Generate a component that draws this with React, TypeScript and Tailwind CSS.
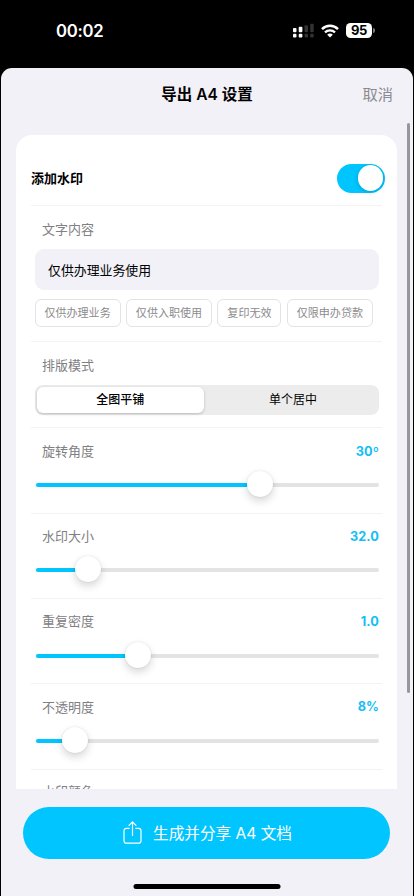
import { useState } from 'react';

interface ISlider {
    label: string;
    value: string;
    percent: number;
}

const presets = ['仅供办理业务', '仅供入职使用', '复印无效', '仅限申办贷款'];
const modes = ['全图平铺', '单个居中'];

const sliders: ISlider[] = [
    { label: '旋转角度', value: '30º', percent: 65.5 },
    { label: '水印大小', value: '32.0', percent: 15.2 },
    { label: '重复密度', value: '1.0', percent: 30 },
    { label: '不透明度', value: '8%', percent: 11.6 },
];

function StatusBar() {
    return (
        <div className="flex h-[68px] shrink-0 items-start justify-between pl-[56px] pr-[39px] text-white">
            <span className="mt-[21px] text-[16.7px] leading-5 font-semibold tracking-[-0.3px]">00:02</span>
            <div className="mt-[23px] flex items-center">
                {/* dual sim signal */}
                <svg width="21" height="15" viewBox="0 0 21 15">
                    <g fill="#fff">
                        <rect x="0" y="5" width="3.5" height="4.3" rx="1" />
                        <rect x="5.7" y="3.7" width="3.7" height="5.6" rx="1" />
                        <rect x="0" y="10.8" width="3.5" height="3.7" rx="1" />
                        <rect x="5.7" y="10.8" width="3.7" height="3.7" rx="1" />
                    </g>
                    <g fill="#333">
                        <rect x="11.5" y="2.2" width="3.5" height="7.1" rx="1" />
                        <rect x="17.2" y="0.8" width="3.5" height="8.5" rx="1" />
                        <rect x="11.5" y="10.8" width="3.5" height="3.7" rx="1" />
                        <rect x="17.2" y="10.8" width="3.5" height="3.7" rx="1" />
                    </g>
                </svg>
                <svg className="ml-[7px]" width="18" height="14" viewBox="0 0 18 14" fill="none" stroke="#fff">
                    <path d="M1 5.1a11.5 11.5 0 0 1 16 0" strokeWidth="2.5" />
                    <path d="M4 8.3a7.3 7.3 0 0 1 10 0" strokeWidth="2.3" />
                    <path d="M9 13.5 6.2 10.7a3.9 3.9 0 0 1 5.6 0Z" fill="#fff" stroke="none" />
                </svg>
                <span className="ml-[7px] flex h-[15px] w-[26px] items-center justify-center rounded-[4.5px] bg-white text-[13px] leading-none font-bold tracking-[-0.3px] text-black">95</span>
                <span className="ml-px h-[5px] w-[2px] rounded-r-full bg-[#777]" />
            </div>
        </div>
    );
}

function SectionLabel({ children }: { children: string }) {
    return <span className="pl-[11px] text-[13px] leading-5 text-[#808083]">{children}</span>;
}

function Slider({ label, value, percent }: ISlider) {
    return (
        <div className="h-[85.3px] border-t border-[#f3f3f4]">
            <div className="flex h-[32.4px] items-start justify-between pt-[12.4px] pr-[3px]">
                <SectionLabel>{label}</SectionLabel>
                <span className="pt-[0.8px] text-[12.7px] leading-5 font-bold tracking-[0.1px] text-[#12bef5]">{value}</span>
            </div>
            <div className="relative mt-[22.3px] mr-[3.5px] ml-[4.5px] h-1 rounded-full bg-[#e3e3e4]">
                <div className="h-1 rounded-full bg-[#00c5ff]" style={{ width: `${percent}%` }} />
                <div
                    className="absolute -top-[12px] size-[26px] -translate-x-1/2 rounded-full bg-white shadow-[0_4px_9px_rgba(0,0,0,0.16),0_0_2px_rgba(0,0,0,0.12)]"
                    style={{ left: `${percent}%` }}
                />
            </div>
        </div>
    );
}

export default function App() {
    const [enabled, setEnabled] = useState(true);
    const [text, setText] = useState('仅供办理业务使用');
    const [mode, setMode] = useState(0);

    return (
        <div className="flex h-[896px] w-[414px] flex-col overflow-hidden bg-black font-[Inter,'Noto_Sans_CJK_SC',sans-serif]">
            <StatusBar />
            <div className="relative mx-px flex min-h-0 flex-1 flex-col rounded-t-[11px] bg-[#f2f1f8]">
                <header className="grid h-[67px] shrink-0 grid-cols-[1fr_auto_1fr] items-start px-[20px] pt-[15px]">
                    <h1 className="col-start-2 text-[15.5px] leading-6 font-semibold text-black">导出 A4 设置</h1>
                    <button className="justify-self-end text-[15.3px] leading-6 text-[#8b8b90]">取消</button>
                </header>

                {/* scrollable settings card */}
                <div className="mr-[16px] ml-[15px] h-[654px] shrink-0 overflow-hidden rounded-t-[16px] bg-white pr-[15px] pl-[15px]">
                    <div className="-mr-[3px] flex h-[70px] items-start justify-between">
                        <span className="mt-[33px] text-[13px] leading-5 font-bold text-black">添加水印</span>
                        <button
                            className="mt-[28.5px] flex h-[29px] w-[48px] items-center justify-end rounded-full bg-[#00c5ff] pr-[2px]"
                            onClick={() => setEnabled(!enabled)}
                        >
                            <span className="size-[25.5px] rounded-full bg-white shadow-[0_1px_4px_rgba(0,0,0,0.2)]" />
                        </button>
                    </div>

                    <div className="flex h-[136px] flex-col border-t border-[#f3f3f4] pt-[13px]">
                        <SectionLabel>文字内容</SectionLabel>
                        <input
                            className="mt-[9.5px] mr-[3px] ml-[4px] h-[41px] rounded-[9px] bg-[#f2f1f7] px-[13px] text-[12.9px] text-black outline-none"
                            value={text}
                            onChange={(e) => setText(e.target.value)}
                        />
                        <div className="mt-[9.5px] ml-[3.5px] flex gap-[5.4px]">
                            {presets.map((preset) => (
                                <button
                                    key={preset}
                                    className="h-[28px] rounded-[6px] border border-[#e3e3e5] px-[8.9px] pt-[2px] text-[11.05px] leading-none whitespace-nowrap text-[#8b8b8e]"
                                    onClick={() => setText(preset)}
                                >
                                    {preset}
                                </button>
                            ))}
                        </div>
                    </div>

                    <div className="flex h-[86.4px] flex-col border-t border-[#f3f3f4] pt-[13px]">
                        <SectionLabel>排版模式</SectionLabel>
                        <div className="mt-[9.5px] mr-[3px] ml-[4px] grid h-[30px] grid-cols-2 rounded-[8px] bg-[#ececec] p-[2px]">
                            {modes.map((name, index) => (
                                <button
                                    key={name}
                                    className={mode === index
                                        ? '-ml-[0.5px] mr-[3px] rounded-[6px] bg-white text-[12px] font-medium text-black shadow-[0_1px_3px_rgba(0,0,0,0.22)]'
                                        : 'ml-[2px] rounded-[6px] text-[12px] text-black'}
                                    onClick={() => setMode(index)}
                                >
                                    {name}
                                </button>
                            ))}
                        </div>
                    </div>

                    {sliders.map((slider) => (
                        <Slider key={slider.label} {...slider} />
                    ))}

                    <div className="border-t border-[#f3f3f4] pt-[8.5px]">
                        <SectionLabel>水印颜色</SectionLabel>
                    </div>
                </div>

                <button className="mr-[23px] ml-[22px] mt-[18px] flex h-[52px] shrink-0 items-center justify-center rounded-full bg-[#00c5ff] pl-[2px] text-white">
                    <svg width="19" height="24" viewBox="0 0 19 24" fill="none" stroke="currentColor" strokeWidth="1.2" strokeLinecap="round" strokeLinejoin="round">
                        <path d="M6.2 7.3H3.5Q1 7.3 1 9.8v9.9q0 2.5 2.5 2.5h12q2.5 0 2.5-2.5v-9.9q0-2.5-2.5-2.5h-2.7" />
                        <path d="M9.5 14.5V1.1M6 4.4l3.5-3.5L13 4.4" />
                    </svg>
                    <span className="mt-[2px] ml-[11px] text-[15.6px] leading-6">生成并分享 A4 文档</span>
                </button>

                {/* scrollbar */}
                <div className="absolute top-[55px] right-[3px] h-[570px] w-[3px] rounded-full bg-[#97979c]" />
                {/* home indicator */}
                <div className="absolute bottom-[7.5px] left-1/2 h-[5px] w-[147px] -translate-x-1/2 rounded-full bg-black" />
            </div>
        </div>
    );
}
